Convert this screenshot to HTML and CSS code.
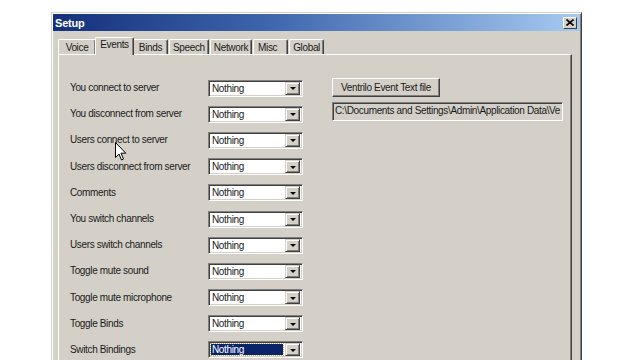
FILE: index.html
```html
<!DOCTYPE html>
<html lang="en">
<head>
    <meta charset="UTF-8">
    <meta name="viewport" content="width=device-width, initial-scale=1.0">
    <title>Setup</title>
    <link rel="stylesheet" href="styles.css">
</head>
<body>
    <div class="window">
        <div class="titlebar">
            <span class="title">Setup</span>
            <span class="close">
                <svg width="8" height="7" viewBox="0 0 8 7"><path d="M0.5 0.5 L7.5 6.5 M7.5 0.5 L0.5 6.5" stroke="#000" stroke-width="1.6"/></svg>
            </span>
        </div>
        <div class="tabs">
            <div class="tab">Voice</div>
            <div class="tab active">Events</div>
            <div class="tab">Binds</div>
            <div class="tab">Speech</div>
            <div class="tab">Network</div>
            <div class="tab misc">Misc</div>
            <div class="tab">Global</div>
        </div>
        <div class="panel">
            <div class="events">
                <label>You connect to server</label>
                <div class="combo"><span class="value">Nothing</span><span class="arrow"></span></div>
                <label>You disconnect from server</label>
                <div class="combo"><span class="value">Nothing</span><span class="arrow"></span></div>
                <label>Users connect to server</label>
                <div class="combo"><span class="value">Nothing</span><span class="arrow"></span></div>
                <label>Users disconnect from server</label>
                <div class="combo"><span class="value">Nothing</span><span class="arrow"></span></div>
                <label>Comments</label>
                <div class="combo"><span class="value">Nothing</span><span class="arrow"></span></div>
                <label>You switch channels</label>
                <div class="combo"><span class="value">Nothing</span><span class="arrow"></span></div>
                <label>Users switch channels</label>
                <div class="combo"><span class="value">Nothing</span><span class="arrow"></span></div>
                <label>Toggle mute sound</label>
                <div class="combo"><span class="value">Nothing</span><span class="arrow"></span></div>
                <label>Toggle mute microphone</label>
                <div class="combo"><span class="value">Nothing</span><span class="arrow"></span></div>
                <label>Toggle Binds</label>
                <div class="combo"><span class="value">Nothing</span><span class="arrow"></span></div>
                <label>Switch Bindings</label>
                <div class="combo focused"><span class="value">Nothing</span><span class="arrow"></span></div>
            </div>
            <div class="side">
                <div class="btn">Ventrilo Event Text file</div>
                <div class="path">C:\Documents and Settings\Admin\Application Data\Ve</div>
            </div>
            <svg class="cursor" width="12" height="19" viewBox="0 0 12 19">
                <path d="M0.5 0.5 L0.5 15.5 L4 12 L6.5 18 L8.5 17 L6 11.2 L10.8 11.2 Z" fill="#fff" stroke="#000" stroke-width="1"/>
            </svg>
        </div>
    </div>
</body>
</html>
```

FILE: styles.css
```css
body {
    margin: 0;
    background: #fff;
    font-family: "Liberation Sans", Arial, sans-serif;
    font-size: 10px;
    letter-spacing: -0.35px;
    color: #1a1a1a;
    overflow: hidden;
    height: 360px;
}
.window {
    margin: 12px 0 0 51px;
    width: 527px;
    height: 400px;
    padding: 1px;
    background: #d4d0c8;
    border: 1px solid;
    border-color: #d4d0c8 #404040 #404040 #d4d0c8;
    box-shadow: inset 1px 1px #fff, inset -1px -1px #808080;
}
.titlebar {
    height: 17px;
    display: flex;
    align-items: center;
    justify-content: space-between;
    padding: 0 3px 0 2px;
    background: linear-gradient(to right, #14307a, #3d64ac 40%, #a6caf0);
}
.title {
    color: #fff;
    font-weight: bold;
    font-size: 11px;
    letter-spacing: -0.2px;
}
.close {
    width: 14px;
    height: 12px;
    display: flex;
    align-items: center;
    justify-content: center;
    background: #d4d0c8;
    border: 1px solid;
    border-color: #fff #404040 #404040 #fff;
    box-sizing: border-box;
}
.tabs {
    display: flex;
    align-items: flex-end;
    height: 23px;
    padding-left: 5px;
}
.tab {
    min-width: 35px;
    height: 15px;
    line-height: 15px;
    padding: 0 3px;
    text-align: center;
    box-sizing: border-box;
    border-top: 1px solid #fff;
    border-left: 1px solid #fff;
    border-right: 1px solid #404040;
    border-radius: 2px 2px 0 0;
    box-shadow: inset -1px 0 #808080;
    margin-right: 1px;
}
.tab:first-child {
    min-width: 38px;
}
.tab.misc {
    text-align: left;
    padding-left: 4px;
}
.tab.active {
    min-width: 39px;
    height: 18px;
    line-height: 14px;
    margin: 0 -1px -1px -2px;
    background: #d4d0c8;
    position: relative;
    z-index: 1;
}
.panel {
    position: relative;
    margin-left: 5px;
    width: 514px;
    height: 340px;
    padding: 20px 0 0 11px;
    box-sizing: border-box;
    border-top: 1px solid #fff;
    border-left: 1px solid #fff;
    border-right: 1px solid #404040;
    box-shadow: inset -1px 0 #808080;
    display: flex;
    align-items: flex-start;
}
.events {
    display: grid;
    grid-template-columns: 138px 95px;
    grid-auto-rows: 26.2px;
    align-items: center;
}
.events label {
    padding-bottom: 1px;
    white-space: nowrap;
}
.combo {
    height: 17px;
    box-sizing: border-box;
    display: flex;
    align-items: center;
    background: #fff;
    border: 1px solid;
    border-color: #808080 #fff #fff #808080;
    box-shadow: inset 1px 1px #404040, inset -1px -1px #d4d0c8;
    padding: 2px;
}
.value {
    flex: 1;
    height: 11px;
    line-height: 11px;
    padding-left: 1px;
}
.focused .value {
    background: #0a246a;
    color: #fff;
    outline: 1px dotted #c8b060;
}
.arrow {
    width: 15px;
    height: 13px;
    margin-left: 2px;
    box-sizing: border-box;
    background: #d4d0c8;
    border: 1px solid;
    border-color: #d4d0c8 #404040 #404040 #d4d0c8;
    box-shadow: inset 1px 1px #fff, inset -1px -1px #808080;
    display: flex;
    align-items: center;
    justify-content: center;
}
.arrow::after {
    content: "";
    border-left: 3px solid transparent;
    border-right: 3px solid transparent;
    border-top: 3px solid #000;
    margin-top: 1px;
}
.side {
    margin-left: 29px;
    margin-top: 3px;
    display: flex;
    flex-direction: column;
    align-items: flex-start;
    gap: 5px;
}
.btn {
    width: 108px;
    height: 19px;
    line-height: 17px;
    box-sizing: border-box;
    text-align: center;
    white-space: nowrap;
    border: 1px solid;
    border-color: #fff #404040 #404040 #fff;
    box-shadow: inset -1px -1px #808080;
}
.path {
    width: 231px;
    height: 19px;
    line-height: 16px;
    box-sizing: border-box;
    padding-left: 2px;
    white-space: nowrap;
    overflow: hidden;
    border: 1px solid;
    border-color: #808080 #fff #fff #808080;
    box-shadow: inset 1px 1px #404040, inset -1px -1px #d4d0c8;
}
.cursor {
    position: absolute;
    left: 56px;
    top: 87px;
}
```
